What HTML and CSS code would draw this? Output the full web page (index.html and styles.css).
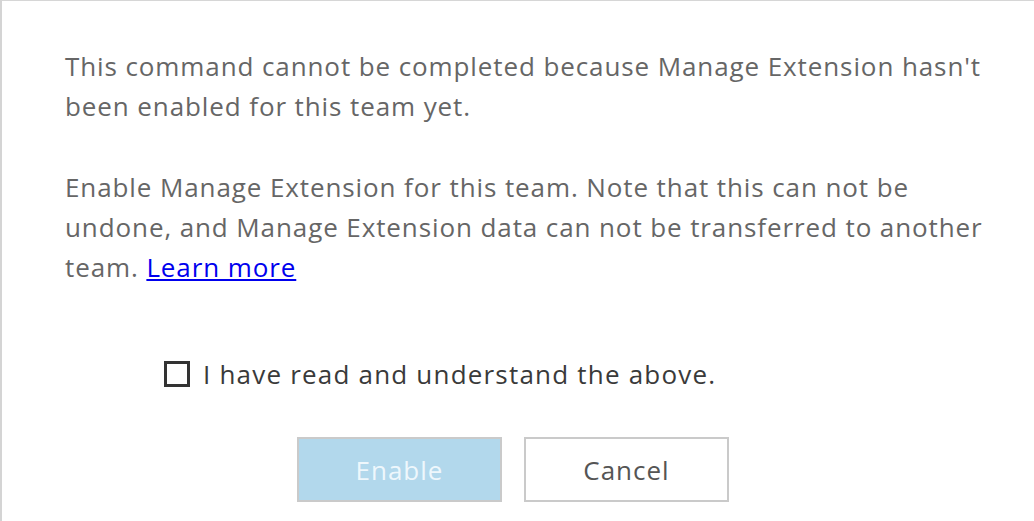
FILE: index.html
```html
<!DOCTYPE html>
<html lang="en">
<head>
<meta charset="utf-8">
<title>Enable Manage Extension</title>
<link rel="stylesheet" href="styles.css">
</head>
<body>
<div class="dialog">
  <p class="msg">This command cannot be completed because Manage Extension hasn't been enabled for this team yet.</p>
  <p class="msg second">Enable Manage Extension for this team. Note that this can not be undone, and Manage Extension data can not be transferred to another team. <a href="#" class="link">Learn more</a></p>
  <label class="confirm">
    <span class="box"></span>
    <span class="confirm-text">I have read and understand the above.</span>
  </label>
  <div class="actions">
    <button class="btn btn-primary" disabled>Enable</button>
    <button class="btn btn-secondary">Cancel</button>
  </div>
</div>
</body>
</html>
```
FILE: styles.css
```css
html, body {
  margin: 0;
  padding: 0;
  background: #ffffff;
}
body {
  font-family: "Open Sans", "Noto Sans", sans-serif;
  font-size: 26px;
  line-height: 40px;
  letter-spacing: 0.9px;
  color: #666666;
}
.dialog {
  box-sizing: border-box;
  height: 521px;
  border-top: 1px solid #d6d6d6;
  border-left: 2px solid #d4d4d4;
  padding: 45px 40px 0 63px;
  overflow: hidden;
}
.msg {
  margin: 0;
  max-width: 935px;
}
.second {
  margin-top: 41px;
}
.link {
  color: #0000ee;
  text-decoration: underline;
}
.confirm {
  display: flex;
  align-items: center;
  margin-top: 67px;
  padding-left: 99px;
  color: #3a3a3a;
  letter-spacing: 1.2px;
}
.box {
  box-sizing: border-box;
  width: 26px;
  height: 26px;
  border: 3px solid #333333;
  margin-right: 13px;
  flex: none;
}
.actions {
  display: flex;
  gap: 22px;
  margin-top: 43px;
  padding-left: 232px;
}
.btn {
  box-sizing: border-box;
  width: 205px;
  height: 65px;
  font-family: inherit;
  font-size: 26px;
  letter-spacing: 1px;
  border: 2px solid #cacaca;
  padding: 0;
}
.btn-primary {
  background: #b2d8ec;
  color: #eef7fc;
}
.btn-secondary {
  background: #ffffff;
  color: #555555;
}
```
